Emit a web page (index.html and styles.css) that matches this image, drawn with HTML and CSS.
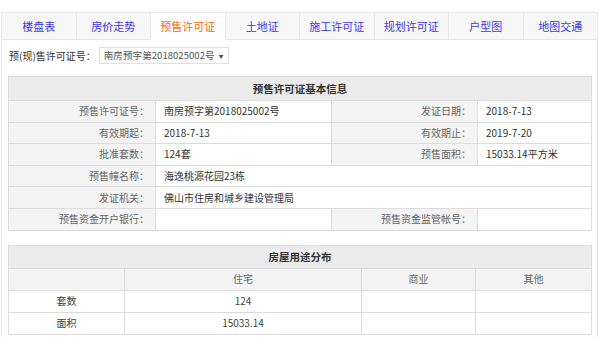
FILE: index.html
```html
<!DOCTYPE html>
<html lang="zh-CN">
<head>
<meta charset="utf-8">
<title>预售许可证</title>
<link rel="stylesheet" href="styles.css">
</head>
<body>
<div class="wrap">
  <ul class="tabs">
    <li class="tab">楼盘表</li>
    <li class="tab">房价走势</li>
    <li class="tab active">预售许可证</li>
    <li class="tab">土地证</li>
    <li class="tab">施工许可证</li>
    <li class="tab">规划许可证</li>
    <li class="tab">户型图</li>
    <li class="tab">地图交通</li>
  </ul>
  <div class="content">
    <div class="pick">
      <span class="pick-label">预(现)售许可证号：</span>
      <span class="select">南房预字第2018025002号<span class="arrow">▼</span></span>
    </div>

    <table class="info">
      <colgroup><col class="c1"><col class="c2"><col class="c3"><col class="c4"></colgroup>
      <tr class="head"><th colspan="4">预售许可证基本信息</th></tr>
      <tr><td class="lab">预售许可证号：</td><td class="val">南房预字第2018025002号</td><td class="lab">发证日期：</td><td class="val">2018-7-13</td></tr>
      <tr><td class="lab">有效期起：</td><td class="val">2018-7-13</td><td class="lab">有效期止：</td><td class="val">2019-7-20</td></tr>
      <tr><td class="lab">批准套数：</td><td class="val">124套</td><td class="lab">预售面积：</td><td class="val">15033.14平方米</td></tr>
      <tr><td class="lab">预售幢名称：</td><td class="val" colspan="3">海逸桃源花园23栋</td></tr>
      <tr><td class="lab">发证机关：</td><td class="val" colspan="3">佛山市住房和城乡建设管理局</td></tr>
      <tr><td class="lab">预售资金开户银行：</td><td class="val"></td><td class="lab">预售资金监管帐号：</td><td class="val"></td></tr>
    </table>

    <table class="use">
      <colgroup><col class="u1"><col class="u2"><col class="u3"><col class="u4"></colgroup>
      <tr class="head"><th colspan="4">房屋用途分布</th></tr>
      <tr class="sub"><td></td><td>住宅</td><td>商业</td><td>其他</td></tr>
      <tr><td>套数</td><td>124</td><td></td><td></td></tr>
      <tr><td>面积</td><td>15033.14</td><td></td><td></td></tr>
    </table>
  </div>
</div>
</body>
</html>
```

FILE: styles.css
```css
* { box-sizing: border-box; }
html, body {
  margin: 0;
  padding: 0;
  background: #fff;
  font-family: "Noto Sans CJK SC", "Noto Sans", sans-serif;
  color: #333;
}
.wrap {
  margin: 12px 0 0 1px;
  width: 597px;
}
.tabs {
  list-style: none;
  margin: 0;
  padding: 0;
  display: flex;
  height: 28px;
  border: 1px solid #e8e8e8;
  background: #f7f7f7;
}
.tab {
  flex: 1;
  text-align: center;
  font-size: 11px;
  line-height: 26px;
  color: #4038e8;
  border-left: 1px solid #e8e8e8;
}
.tab:first-child { border-left: none; }
.tab.active {
  background: #fff;
  color: #ff6a00;
  height: 27px;
}
.content {
  border-left: 1px solid #ececec;
  border-right: 1px solid #e4e4e4;
  padding: 7px 5px 6px 6px;
}
.pick {
  display: flex;
  align-items: center;
  height: 17px;
  margin-left: 1px;
  white-space: nowrap;
}
.pick-label {
  font-size: 10px;
  color: #333;
}
.select {
  margin-left: 3px;
  height: 17px;
  width: 130px;
  border: 1px solid #e0e0e0;
  font-size: 9.6px;
  color: #555;
  line-height: 15px;
  padding-left: 4px;
  display: flex;
  align-items: center;
  white-space: nowrap;
  overflow: hidden;
}
.arrow {
  font-size: 5px;
  margin-left: 4px;
  color: #555;
}
table {
  border-collapse: collapse;
  width: 583px;
  table-layout: fixed;
  font-size: 10px;
  border: 1px solid #dcdcdc;
}
.info { margin-top: 12px; }
.use { margin-top: 14px; }
.c1 { width: 147px; }
.c2 { width: 176px; }
.c3 { width: 146px; }
.c4 { width: 114px; }
.u1 { width: 116px; }
.u2 { width: 237px; }
.u3 { width: 114px; }
.u4 { width: 116px; }
th, td {
  border: 1px solid #dcdcdc;
  padding: 0;
  white-space: nowrap;
  line-height: 12px;
}
tr { height: 21.6px; }
.head { height: 24px; }
.head th {
  background: #ebebeb;
  font-weight: bold;
  color: #333;
  font-size: 10.5px;
  text-align: center;
}
.lab {
  background: #f4f4f4;
  color: #666;
  text-align: right;
  padding-right: 6px;
}
.val {
  background: #fff;
  color: #333;
  padding-left: 8px;
}
.use .head { height: 23px; }
.use td {
  text-align: center;
  color: #444;
  height: 22px;
}
.use .sub td {
  background: #f4f4f4;
  color: #666;
}
```
